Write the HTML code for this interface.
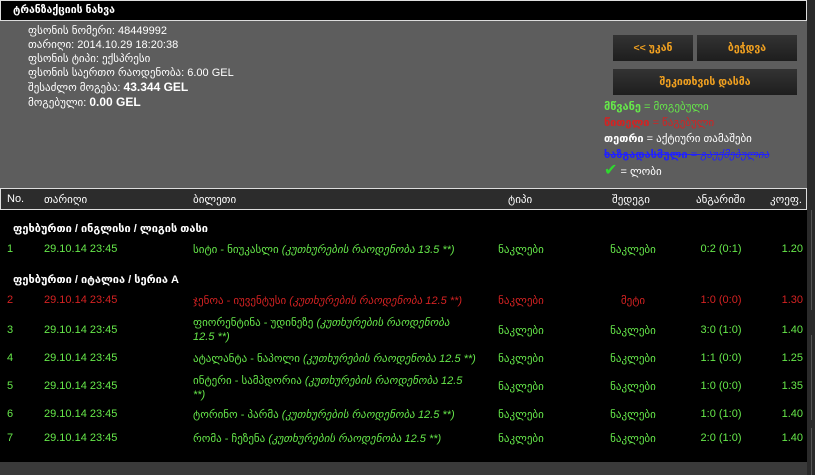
<!DOCTYPE html>
<html><head><meta charset="utf-8"><style>
*{margin:0;padding:0;box-sizing:border-box}
body{width:815px;height:475px;background:#3a3a3a;font-family:"Liberation Sans","DejaVu Sans",sans-serif;font-size:11px;color:#fff;position:relative;overflow:hidden}
.a{position:absolute;white-space:nowrap}
.g{color:#66e84a}.r{color:#d42222}
.btn{position:absolute;background:linear-gradient(#333,#1e1e1e);color:#f0a020;font-weight:bold;text-align:center;font-size:10.5px}
.c{text-align:center;transform:translateX(-50%)}
.rt{transform:translateX(-100%)}
i{font-style:italic}
</style></head><body>
<div class="a" style="left:0;top:0;width:807px;height:21px;background:#000;border:1px solid #ddd"></div>
<div class="a" style="left:13px;top:4px;font-weight:bold;font-size:10.5px">ტრანზაქციის ნახვა</div>
<div class="a" style="left:0;top:21px;width:807px;height:167px;background:#5d5d5d"></div>
<div class="a" style="left:28px;top:24px;line-height:14px;font-size:11px;color:#fff">ფსონის ნომერი: 48449992<br>თარიღი: 2014.10.29 18:20:38<br>ფსონის ტიპი: ექსპრესი<br>ფსონის საერთო რაოდენობა: 6.00 GEL<br>შესაძლო მოგება: <b style="font-size:12px">43.344 GEL</b><br>მოგებული: <b style="font-size:12px">0.00 GEL</b></div>
<div class="btn" style="left:613px;top:35px;width:80px;height:26px;line-height:26px">&lt;&lt; უკან</div>
<div class="btn" style="left:697px;top:35px;width:100px;height:26px;line-height:26px">ბეჭდვა</div>
<div class="btn" style="left:613px;top:69px;width:184px;height:26px;line-height:26px">შეკითხვის დასმა</div>
<div class="a" style="left:604px;top:99px;line-height:16px;font-size:11px">
<span class="g"><b>მწვანე</b> = მოგებული</span><br>
<span class="r"><b>წითელი</b> = წაგებული</span><br>
<span><b>თეთრი</b> = აქტიური თამაშები</span><br>
<span style="color:#2020ff;text-decoration:line-through"><b>ხაზგადასმული</b> = <i>გაუქმებულია</i></span><br>
<span><b style="color:#2fd82f;font-size:16px">✔</b> = ლობი</span></div>
<div class="a" style="left:0;top:188px;width:807px;height:22px;background:#2c2c2c;border:1px solid #ddd"></div>
<div class="a" style="left:7px;top:193px">No.</div>
<div class="a" style="left:44px;top:193px">თარიღი</div>
<div class="a" style="left:193px;top:193px">ბილეთი</div>
<div class="a" style="left:508px;top:193px">ტიპი</div>
<div class="a" style="left:612px;top:193px">შედეგი</div>
<div class="a" style="left:696px;top:193px">ანგარიში</div>
<div class="a" style="left:770px;top:193px">კოეფ.</div>
<div class="a" style="left:0;top:210px;width:807px;height:252px;background:#000"></div>
<div class="a" style="left:13px;top:222px;font-weight:bold">ფეხბურთი / ინგლისი / ლიგის თასი</div>
<div class="a" style="left:13px;top:273px;font-weight:bold">ფეხბურთი / იტალია / სერია A</div>
<div class="g">
<div class="a" style="left:7px;top:243px">1</div><div class="a" style="left:44px;top:243px">29.10.14 23:45</div><div class="a" style="left:193px;top:243px">სიტი - ნიუკასლი <i>(კუთხურების რაოდენობა 13.5 **)</i></div><div class="a c" style="left:521px;top:243px">ნაკლები</div><div class="a c" style="left:633px;top:243px">ნაკლები</div><div class="a c" style="left:721px;top:243px">0:2 (0:1)</div><div class="a rt" style="left:803px;top:243px">1.20</div>
</div>
<div class="r">
<div class="a" style="left:7px;top:294px">2</div><div class="a" style="left:44px;top:294px">29.10.14 23:45</div><div class="a" style="left:193px;top:294px">ჯენოა - იუვენტუსი <i>(კუთხურების რაოდენობა 12.5 **)</i></div><div class="a c" style="left:521px;top:294px">ნაკლები</div><div class="a c" style="left:633px;top:294px">მეტი</div><div class="a c" style="left:721px;top:294px">1:0 (0:0)</div><div class="a rt" style="left:803px;top:294px">1.30</div>
</div>
<div class="g">
<div class="a" style="left:7px;top:324px">3</div><div class="a" style="left:44px;top:324px">29.10.14 23:45</div><div class="a" style="left:193px;top:316px;line-height:14px;white-space:normal;width:270px">ფიორენტინა - უდინეზე <i>(კუთხურების რაოდენობა 12.5 **)</i></div><div class="a c" style="left:521px;top:324px">ნაკლები</div><div class="a c" style="left:633px;top:324px">ნაკლები</div><div class="a c" style="left:721px;top:324px">3:0 (1:0)</div><div class="a rt" style="left:803px;top:324px">1.40</div>
<div class="a" style="left:7px;top:352px">4</div><div class="a" style="left:44px;top:352px">29.10.14 23:45</div><div class="a" style="left:193px;top:352px">ატალანტა - ნაპოლი <i>(კუთხურების რაოდენობა 12.5 **)</i></div><div class="a c" style="left:521px;top:352px">ნაკლები</div><div class="a c" style="left:633px;top:352px">ნაკლები</div><div class="a c" style="left:721px;top:352px">1:1 (0:0)</div><div class="a rt" style="left:803px;top:352px">1.25</div>
<div class="a" style="left:7px;top:380px">5</div><div class="a" style="left:44px;top:380px">29.10.14 23:45</div><div class="a" style="left:193px;top:374px;line-height:14px;white-space:normal;width:278px">ინტერი - სამპდორია <i>(კუთხურების რაოდენობა 12.5 **)</i></div><div class="a c" style="left:521px;top:380px">ნაკლები</div><div class="a c" style="left:633px;top:380px">ნაკლები</div><div class="a c" style="left:721px;top:380px">1:0 (0:0)</div><div class="a rt" style="left:803px;top:380px">1.35</div>
<div class="a" style="left:7px;top:408px">6</div><div class="a" style="left:44px;top:408px">29.10.14 23:45</div><div class="a" style="left:193px;top:408px">ტორინო - პარმა <i>(კუთხურების რაოდენობა 12.5 **)</i></div><div class="a c" style="left:521px;top:408px">ნაკლები</div><div class="a c" style="left:633px;top:408px">ნაკლები</div><div class="a c" style="left:721px;top:408px">1:0 (1:0)</div><div class="a rt" style="left:803px;top:408px">1.40</div>
<div class="a" style="left:7px;top:432px">7</div><div class="a" style="left:44px;top:432px">29.10.14 23:45</div><div class="a" style="left:193px;top:432px">რომა - ჩეზენა <i>(კუთხურების რაოდენობა 12.5 **)</i></div><div class="a c" style="left:521px;top:432px">ნაკლები</div><div class="a c" style="left:633px;top:432px">ნაკლები</div><div class="a c" style="left:721px;top:432px">2:0 (1:0)</div><div class="a rt" style="left:803px;top:432px">1.40</div>
</div>
<div class="a" style="left:807px;top:0;width:8px;height:475px;background:#2a2a2a"></div>
<div class="a" style="left:811px;top:210px;width:4px;height:100px;border-left:1px solid #555"></div>
<div class="a" style="left:811px;top:335px;width:4px;height:85px;border-left:1px solid #555"></div>
<div class="a" style="left:811px;top:428px;width:4px;height:47px;border-left:1px solid #555"></div>
</body></html>
